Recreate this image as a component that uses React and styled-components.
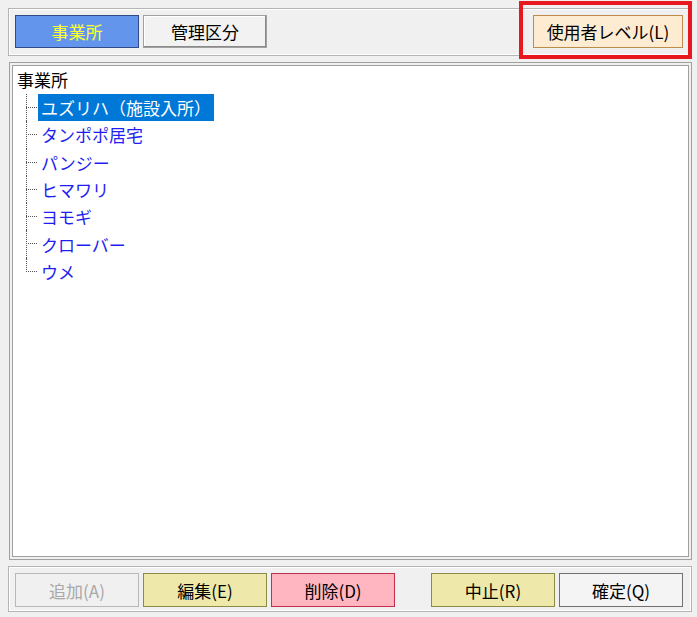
import React, { useState } from "react";
import styled, { createGlobalStyle } from "styled-components";

const GlobalStyle = createGlobalStyle`
  html, body { margin: 0; padding: 0; background: #f0f0f0; }
  body { font-family: "Noto Sans CJK JP", "Noto Sans", sans-serif; }
`;

const OFFICES = [
  "ユズリハ（施設入所）",
  "タンポポ居宅",
  "パンジー",
  "ヒマワリ",
  "ヨモギ",
  "クローバー",
  "ウメ",
];

export default function App() {
  const [tab, setTab] = useState("office");
  const [selected, setSelected] = useState(0);

  return (
    <>
      <GlobalStyle />
      <Page>
        <TopBar>
          <TabBtn $active={tab === "office"} onClick={() => setTab("office")}>
            事業所
          </TabBtn>
          <TabBtn $active={tab === "class"} onClick={() => setTab("class")}>
            管理区分
          </TabBtn>
          <Spacer />
          <LevelBtn>使用者レベル(L)</LevelBtn>
          <Marker />
        </TopBar>

        <TreePanel>
          <RootRow>事業所</RootRow>
          <Children>
            {OFFICES.map((name, i) => (
              <Item key={name} $last={i === OFFICES.length - 1}>
                <Label $selected={selected === i} onClick={() => setSelected(i)}>
                  {name}
                </Label>
              </Item>
            ))}
          </Children>
        </TreePanel>

        <BottomBar>
          <ActionBtn $kind="disabled" disabled>追加(A)</ActionBtn>
          <ActionBtn $kind="yellow">編集(E)</ActionBtn>
          <ActionBtn $kind="pink">削除(D)</ActionBtn>
          <Spacer />
          <ActionBtn $kind="yellow">中止(R)</ActionBtn>
          <ActionBtn $kind="plain">確定(Q)</ActionBtn>
        </BottomBar>
      </Page>
    </>
  );
}

const Page = styled.div`
  width: 684px;
  padding: 8px 5px 5px 8px;
  display: flex;
  flex-direction: column;
  gap: 6px;
`;

const TopBar = styled.div`
  position: relative;
  height: 48px;
  box-sizing: border-box;
  border: 1px solid #b4b4b4;
  box-shadow: inset 0 0 0 1px #fff;
  padding: 6px 8px 7px 6px;
  display: flex;
  gap: 4px;
`;

const Spacer = styled.div`flex: 1;`;

const TabBtn = styled.button`
  width: 124px;
  height: 33px;
  margin: 0;
  padding: 0;
  font-family: inherit;
  font-size: 17px;
  cursor: pointer;
  background: ${({ $active }) => ($active ? "#6495ed" : "#f2f2f2")};
  color: ${({ $active }) => ($active ? "#ffff33" : "#000")};
  border: 1px solid ${({ $active }) => ($active ? "#2f4a86" : "#a0a0a0")};
  box-shadow: ${({ $active }) =>
    $active ? "none" : "inset -1px -1px 0 #8a8a8a, inset 1px 1px 0 #fff"};
`;

const LevelBtn = styled.button`
  width: 150px;
  height: 33px;
  margin: 0;
  padding: 0;
  font-family: inherit;
  font-size: 17px;
  color: #000;
  background: #fdebd2;
  border: 1px solid #c08a48;
  cursor: pointer;
`;

const Marker = styled.div`
  position: absolute;
  left: 510px;
  top: -8px;
  width: 173px;
  height: 58px;
  box-sizing: border-box;
  border: 4px solid #e81820;
  pointer-events: none;
`;

const TreePanel = styled.div`
  height: 498px;
  box-sizing: border-box;
  margin-left: 1px;
  background: #fff;
  border: 1px solid #a0a0a0;
  box-shadow: inset 0 0 0 2px #f0f0f0, inset 0 0 0 3px #a0a0a0;
  padding: 3px 4px;
  font-size: 17px;
  line-height: 27px;
`;

const RootRow = styled.div`
  height: 28px;
  padding-left: 3px;
  color: #000;
`;

const Children = styled.div`
  margin-left: 12px;
`;

const Item = styled.div`
  position: relative;
  height: 27.3px;
  padding-left: 12px;
  display: flex;
  align-items: center;

  &::before {
    content: "";
    position: absolute;
    left: 0;
    top: 13px;
    width: 11px;
    border-top: 1px dotted #555;
  }

  &::after {
    content: "";
    position: absolute;
    left: 0;
    top: 0;
    height: ${({ $last }) => ($last ? "14px" : "100%")};
    border-left: 1px dotted #555;
  }
`;

const Label = styled.span`
  padding: 0 3px;
  height: 27px;
  line-height: 27px;
  cursor: default;
  color: ${({ $selected }) => ($selected ? "#fff" : "#1e1ef0")};
  background: ${({ $selected }) => ($selected ? "#0078d7" : "transparent")};
`;

const BottomBar = styled.div`
  height: 46px;
  box-sizing: border-box;
  border: 1px solid #b4b4b4;
  box-shadow: inset 0 0 0 1px #fff;
  padding: 6px 8px 4px 6px;
  display: flex;
  gap: 4px;
`;

const KINDS = {
  disabled: { bg: "#f0f0f0", border: "#b8b8b8", color: "#a8a8a8" },
  yellow: { bg: "#eee8aa", border: "#8c8a44", color: "#000" },
  pink: { bg: "#ffb6c1", border: "#c0304a", color: "#000" },
  plain: { bg: "#f4f4f4", border: "#707070", color: "#000" },
};

const ActionBtn = styled.button`
  width: 124px;
  height: 34px;
  margin: 0;
  padding: 0;
  font-family: inherit;
  font-size: 17px;
  cursor: pointer;
  background: ${({ $kind }) => KINDS[$kind].bg};
  border: 1px solid ${({ $kind }) => KINDS[$kind].border};
  color: ${({ $kind }) => KINDS[$kind].color};
  &:disabled { cursor: default; }
`;
